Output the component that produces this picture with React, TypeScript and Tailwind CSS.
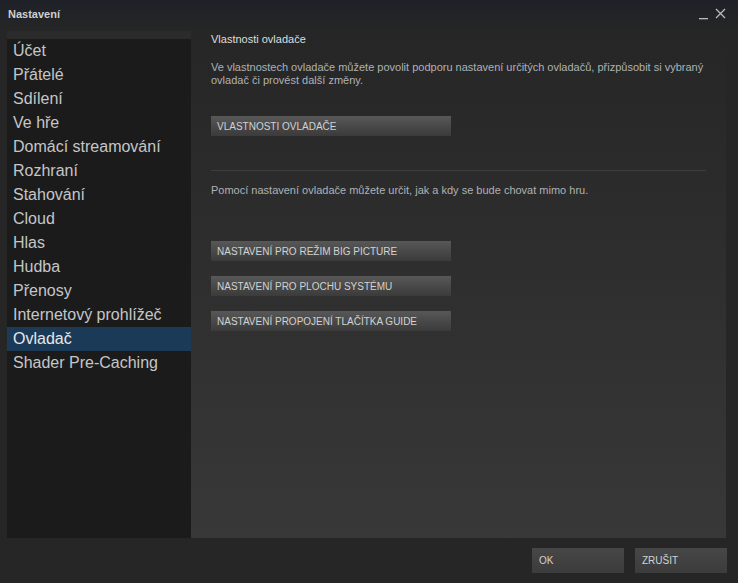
import React from "react";

const items = [
  "Účet",
  "Přátelé",
  "Sdílení",
  "Ve hře",
  "Domácí streamování",
  "Rozhraní",
  "Stahování",
  "Cloud",
  "Hlas",
  "Hudba",
  "Přenosy",
  "Internetový prohlížeč",
  "Ovladač",
  "Shader Pre-Caching",
];

function Btn({ children }: { children: React.ReactNode }) {
  return (
    <div className="w-[240px] h-[20px] flex items-center pl-[6px] text-[10px] text-[#d2d2d2] bg-gradient-to-b from-[#585858] to-[#3b3b3b] whitespace-nowrap">
      {children}
    </div>
  );
}

export default function App() {
  return (
    <div
      className="w-[738px] h-[583px] bg-[#262626] flex flex-col overflow-hidden"
      style={{ fontFamily: '"Liberation Sans", Arial, sans-serif' }}
    >
      {/* title bar */}
      <div className="h-[31px] shrink-0 bg-gradient-to-b from-[#1e2128] to-[#262626] flex items-start justify-between pl-[8px] pr-[12px]">
        <div className="mt-[6px] text-[11px] font-bold text-[#cfcfcf]">Nastavení</div>
        <div className="flex items-start gap-[7px] mt-[8px]">
          <svg width="9" height="12" viewBox="0 0 9 12" className="mt-[1px]">
            <rect x="0" y="9" width="9" height="1.3" fill="#b7bbbe" />
          </svg>
          <svg width="11" height="11" viewBox="0 0 11 11">
            <path d="M1 1 L10 10 M10 1 L1 10" stroke="#b7bbbe" strokeWidth="1.3" />
          </svg>
        </div>
      </div>

      {/* main */}
      <div className="h-[507px] shrink-0 ml-[7px] mr-[12px] flex">
        <div className="w-[184px] bg-[#1b1b1b] flex flex-col">
          <div className="h-[8px] bg-[#2b2b2b]" />
          {items.map((it) => (
            <div
              key={it}
              className={
                "h-[24px] flex items-center pl-[6px] text-[16px] whitespace-nowrap " +
                (it === "Ovladač" ? "bg-[#1b3a57] text-[#e4e8ec]" : "text-[#c4c6c8]")
              }
            >
              {it}
            </div>
          ))}
        </div>
        <div className="flex-1 bg-gradient-to-b from-[#262626] to-[#383838] pl-[20px] pr-[20px] flex flex-col">
          <div className="mt-[1px] text-[11px] leading-[14px] text-[#dedede]">Vlastnosti ovladače</div>
          <div className="mt-[15px] text-[11px] leading-[13px] text-[#aeb2b6] whitespace-nowrap">
            Ve vlastnostech ovladače můžete povolit podporu nastavení určitých ovladačů, přizpůsobit si vybraný
            <br />
            ovladač či provést další změny.
          </div>
          <div className="mt-[29px]">
            <Btn>VLASTNOSTI OVLADAČE</Btn>
          </div>
          <div className="mt-[34px] h-px bg-[#3e3e3e]" />
          <div className="mt-[13px] text-[11px] leading-[13px] text-[#aeb2b6] whitespace-nowrap">
            Pomocí nastavení ovladače můžete určit, jak a kdy se bude chovat mimo hru.
          </div>
          <div className="mt-[44px] flex flex-col gap-[15px]">
            <Btn>NASTAVENÍ PRO REŽIM BIG PICTURE</Btn>
            <Btn>NASTAVENÍ PRO PLOCHU SYSTÉMU</Btn>
            <Btn>NASTAVENÍ PROPOJENÍ TLAČÍTKA GUIDE</Btn>
          </div>
        </div>
      </div>

      {/* footer */}
      <div className="flex justify-end gap-[11px] pt-[10px] pr-[11px]">
        <div className="w-[92px] h-[25px] flex items-center pl-[7px] text-[10px] text-[#d2d2d2] bg-gradient-to-b from-[#474747] to-[#3c3c3c]">
          OK
        </div>
        <div className="w-[92px] h-[25px] flex items-center pl-[7px] text-[10px] text-[#d2d2d2] bg-gradient-to-b from-[#474747] to-[#3c3c3c]">
          ZRUŠIT
        </div>
      </div>
    </div>
  );
}
